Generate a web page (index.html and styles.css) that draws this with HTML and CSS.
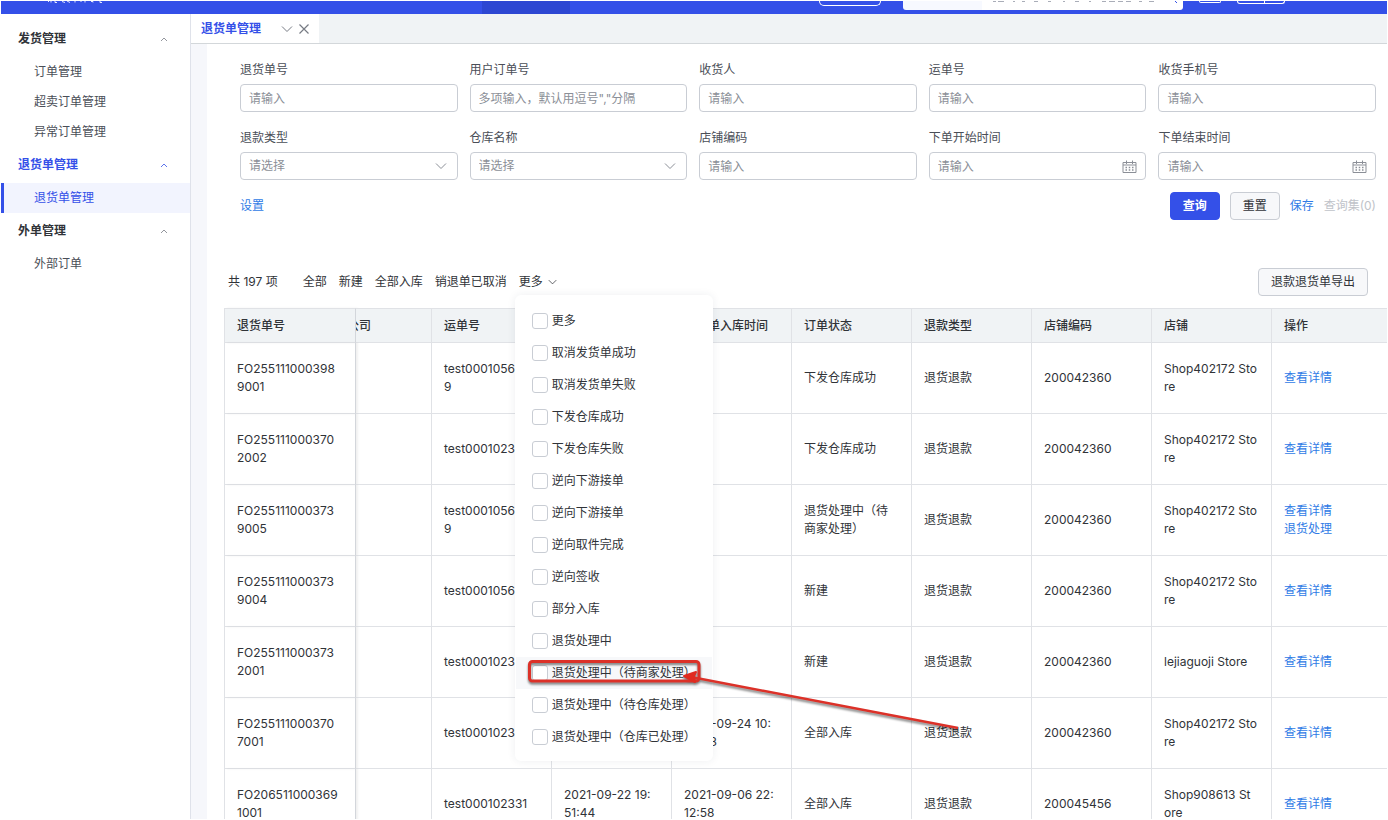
FILE: index.html
```html
<!DOCTYPE html>
<html lang="zh-CN">
<head>
<meta charset="utf-8">
<title>退货单管理</title>
<link rel="stylesheet" href="styles.css">
</head>
<body>
<svg class="symbols" aria-hidden="true">
  <symbol id="chev-down" viewBox="0 0 12 8"><path d="M1 1.5 6 6.5 11 1.5" fill="none" stroke="currentColor"/></symbol>
  <symbol id="chev-up" viewBox="0 0 8 5"><path d="M1 4 4 1 7 4" fill="none" stroke="currentColor" stroke-width=".8"/></symbol>
  <symbol id="calendar" viewBox="0 0 15 13"><path d="M1 2.5h13v10H1zM1 5h13M4.500.5V4M10.500.5V4" fill="none" stroke="currentColor"/><path d="M3.500 7.500h1.500M6.750 7.500h1.500M10 7.500h1.500M3.500 10h1.500M6.750 10h1.500M10 10h1.500" stroke="currentColor" stroke-width="1.500"/></symbol>
</svg>
<header class="topbar">
  <svg class="brand" width="60" height="4" viewBox="0 0 60 4" aria-hidden="true"><path d="M2 .5h1M5 0v1.500M9 0v1.500h2M16 .5l3 1M21 0l3 1.500M29 0v1.500M35 0v1M39 0v1.500M45 .5h2v1M54 0v1.500h2" fill="none" stroke="#dfe4ff"/></svg>
  <span class="topbar-tab"></span>
  <div class="topbar-tools">
    <span class="pill"></span>
    <span class="search"><svg width="280" height="3" viewBox="0 0 280 3" aria-hidden="true"><path d="M90 .5h3m2 0h6m9 0h2m7 0h3m9 0h4m10 0h3m12 0h2m10 0h4m10 0h2m11 0h4m3 0h6m3 0h5m3 0h5m8 0h3m7 0h5" stroke="#a9adb8"/><path d="M272 0l2 2" stroke="#3450e8"/></svg></span>
    <span class="chip"></span>
    <span class="split"></span>
  </div>
</header>
<div class="shell">
  <nav class="sidebar">
    <h2 class="group">发货管理<svg class="up"><use href="#chev-up"/></svg></h2>
    <a class="item" href="#">订单管理</a>
    <a class="item" href="#">超卖订单管理</a>
    <a class="item" href="#">异常订单管理</a>
    <h2 class="group current">退货单管理<svg class="up"><use href="#chev-up"/></svg></h2>
    <a class="item active" href="#">退货单管理</a>
    <h2 class="group">外单管理<svg class="up"><use href="#chev-up"/></svg></h2>
    <a class="item" href="#">外部订单</a>
  </nav>
  <main class="main">
    <div class="tabs">
      <div class="tab">
        <span>退货单管理</span>
        <button class="icon-btn" aria-label="展开"><svg class="down"><use href="#chev-down"/></svg></button>
        <button class="icon-btn" aria-label="关闭"><svg class="close" viewBox="0 0 10 10"><path d="M.5.5l9 9M9.500.5l-9 9" fill="none" stroke="currentColor" stroke-width="1.200"/></svg></button>
      </div>
    </div>
    <section class="panel">
      <form class="filters">
        <div class="field"><label for="f1">退货单号</label><div class="control"><input id="f1" type="text" placeholder="请输入"></div></div>
        <div class="field"><label for="f2">用户订单号</label><div class="control"><input id="f2" type="text" placeholder='多项输入，默认用逗号","分隔'></div></div>
        <div class="field"><label for="f3">收货人</label><div class="control"><input id="f3" type="text" placeholder="请输入"></div></div>
        <div class="field"><label for="f4">运单号</label><div class="control"><input id="f4" type="text" placeholder="请输入"></div></div>
        <div class="field"><label for="f5">收货手机号</label><div class="control"><input id="f5" type="text" placeholder="请输入"></div></div>
        <div class="field"><label for="f6">退款类型</label><div class="control"><select id="f6"><option>请选择</option></select><svg class="down"><use href="#chev-down"/></svg></div></div>
        <div class="field"><label for="f7">仓库名称</label><div class="control"><select id="f7"><option>请选择</option></select><svg class="down"><use href="#chev-down"/></svg></div></div>
        <div class="field"><label for="f8">店铺编码</label><div class="control"><input id="f8" type="text" placeholder="请输入"></div></div>
        <div class="field"><label for="f9">下单开始时间</label><div class="control"><input id="f9" type="text" placeholder="请输入"><svg class="cal"><use href="#calendar"/></svg></div></div>
        <div class="field"><label for="f10">下单结束时间</label><div class="control"><input id="f10" type="text" placeholder="请输入"><svg class="cal"><use href="#calendar"/></svg></div></div>
      </form>
      <div class="actions">
        <a class="link" href="#">设置</a>
        <div class="action-group">
          <button class="btn primary">查询</button>
          <button class="btn">重置</button>
          <a class="link" href="#">保存</a>
          <span class="muted">查询集(0)</span>
        </div>
      </div>
      <div class="toolbar">
        <span class="total">共 197 项</span>
        <div class="states">
          <a href="#">全部</a>
          <a href="#">新建</a>
          <a href="#">全部入库</a>
          <a href="#">销退单已取消</a>
          <div class="more">
            <button class="more-btn">更多<svg class="small"><use href="#chev-down"/></svg></button>
            <div class="menu">
              <label><input type="checkbox">更多</label>
              <label><input type="checkbox">取消发货单成功</label>
              <label><input type="checkbox">取消发货单失败</label>
              <label><input type="checkbox">下发仓库成功</label>
              <label><input type="checkbox">下发仓库失败</label>
              <label><input type="checkbox">逆向下游接单</label>
              <label><input type="checkbox">逆向下游接单</label>
              <label><input type="checkbox">逆向取件完成</label>
              <label><input type="checkbox">逆向签收</label>
              <label><input type="checkbox">部分入库</label>
              <label><input type="checkbox">退货处理中</label>
              <label class="hover"><input type="checkbox">退货处理中（待商家处理）
                <svg class="callout" width="450" height="80" viewBox="0 0 450 80" aria-hidden="true"><rect x="13.500" y="4.500" width="169.500" height="19.500" rx="3" fill="none" stroke="#dc3128" stroke-width="3"/><path d="M170 19L442 71" stroke="#dc3128" stroke-width="2.500"/><path d="M168 19L180 15L178 19L179 25Z" fill="#e02b20" stroke="#e02b20" stroke-width="2" stroke-linejoin="round"/></svg>
              </label>
              <label><input type="checkbox">退货处理中（待仓库处理）</label>
              <label><input type="checkbox">退货处理中（仓库已处理）</label>
            </div>
          </div>
        </div>
        <button class="btn export">退款退货单导出</button>
      </div>
      <table class="grid">
        <colgroup><col class="c-id"><col class="c-co"><col class="c"><col class="c"><col class="c"><col class="c"><col class="c"><col class="c"><col class="c"><col></colgroup>
        <thead>
          <tr><th>退货单号</th><th class="under"><div>公司</div></th><th>运单号</th><th></th><th>销退单入库时间</th><th>订单状态</th><th>退款类型</th><th>店铺编码</th><th>店铺</th><th>操作</th></tr>
        </thead>
        <tbody>
          <tr><td>FO255111000398<br>9001</td><td></td><td>test000105600<br>9</td><td></td><td></td><td>下发仓库成功</td><td>退货退款</td><td>200042360</td><td>Shop402172 Sto<br>re</td><td><a class="link" href="#">查看详情</a></td></tr>
          <tr><td>FO255111000370<br>2002</td><td></td><td>test000102331</td><td></td><td></td><td>下发仓库成功</td><td>退货退款</td><td>200042360</td><td>Shop402172 Sto<br>re</td><td><a class="link" href="#">查看详情</a></td></tr>
          <tr><td>FO255111000373<br>9005</td><td></td><td>test000105600<br>9</td><td></td><td></td><td>退货处理中（待商家处理）</td><td>退货退款</td><td>200042360</td><td>Shop402172 Sto<br>re</td><td><a class="link" href="#">查看详情</a><br><a class="link" href="#">退货处理</a></td></tr>
          <tr><td>FO255111000373<br>9004</td><td></td><td>test000105600</td><td></td><td></td><td>新建</td><td>退货退款</td><td>200042360</td><td>Shop402172 Sto<br>re</td><td><a class="link" href="#">查看详情</a></td></tr>
          <tr><td>FO255111000373<br>2001</td><td></td><td>test000102331</td><td></td><td></td><td>新建</td><td>退货退款</td><td>200042360</td><td>lejiaguoji Store</td><td><a class="link" href="#">查看详情</a></td></tr>
          <tr><td>FO255111000370<br>7001</td><td></td><td>test000102331</td><td></td><td>2021-09-24 10:<br>25:38</td><td>全部入库</td><td>退货退款</td><td>200042360</td><td>Shop402172 Sto<br>re</td><td><a class="link" href="#">查看详情</a></td></tr>
          <tr><td>FO206511000369<br>1001</td><td></td><td>test000102331</td><td>2021-09-22 19:<br>51:44</td><td>2021-09-06 22:<br>12:58</td><td>全部入库</td><td>退货退款</td><td>200045456</td><td>Shop908613 St<br>ore</td><td><a class="link" href="#">查看详情</a></td></tr>
        </tbody>
      </table>
    </section>
  </main>
</div>
</body>
</html>
```
FILE: styles.css
```css
* { box-sizing: border-box; }
body {
  margin: 0;
  padding: 1px;
  height: 100vh;
  overflow: hidden;
  display: flex;
  flex-direction: column;
  background: #fff;
  color: #303338;
  font: 12px/18px Inter, "Noto Sans CJK SC", sans-serif;
}
a { color: inherit; text-decoration: none; }
button, input, select { font: inherit; color: inherit; }
button { cursor: pointer; }
.symbols { display: none; }

.topbar {
  flex: none;
  height: 13px;
  display: flex;
  align-items: flex-start;
  overflow: hidden;
  padding: 0 102px 0 45px;
  background: #3450e8;
}
.brand { display: block; }
.topbar-tab { width: 88px; height: 13px; margin-left: 376px; background: #2d47d2; }
.topbar-tools { display: flex; align-items: flex-start; gap: 16px; margin-left: auto; }
.pill { width: 62px; height: 5px; margin-right: 6px; border: 1px solid #fff; border-top: 0; border-radius: 0 0 16px 16px; }
.search { width: 280px; height: 9px; border-radius: 0 0 3px 3px; background: linear-gradient(90deg, #f7f9ff 79px, #fff 79px); }
.search svg { display: block; }
.chip { width: 22px; height: 2px; border: 1px solid #fff; border-top: 0; border-radius: 0 0 4px 4px; }
.split { width: 48px; height: 3px; border: 1px solid #fff; border-top: 0; border-radius: 0 0 4px 4px; background: linear-gradient(#fff, #fff) 26px 0 / 1px 100% no-repeat; }

.shell { flex: 1; min-height: 0; display: flex; }
.sidebar { flex: none; width: 190px; padding-top: 7px; border-right: 1px solid #dfe2ea; }
.group {
  display: flex;
  align-items: center;
  justify-content: space-between;
  height: 36px;
  margin: 0;
  padding: 0 22px 0 17px;
  font-size: 12px;
  font-weight: 700;
}
.up { width: 8px; height: 5px; color: #777b84; }
.current { color: #3450e8; }
.current .up { color: #3450e8; }
.item { display: flex; align-items: center; height: 30px; padding-left: 33px; color: #4a4e57; }
.active { padding-left: 30px; border-left: 3px solid #3450e8; background: #f2f4fe; color: #3450e8; }

.main { flex: 1; min-width: 0; display: flex; flex-direction: column; background: #f6f7fb; }
.tabs { flex: none; display: flex; height: 30px; border-bottom: 1px solid #d3d7da; background: #f0f3f5; }
.tab { display: flex; align-items: center; gap: 6px; width: 128px; padding-left: 10px; background: #fff; color: #3450e8; font-weight: 700; }
.tab span { margin-right: 14px; }
.icon-btn { display: flex; padding: 0; border: 0; background: none; color: #777b84; }
.down { width: 12px; height: 8px; color: #777b84; }
.close { width: 10px; height: 10px; }

.panel { flex: 1; min-height: 0; overflow: hidden; margin-left: 16px; padding: 17px 0 0 17px; background: #fff; }
.filters { display: grid; grid-template-columns: repeat(5, 1fr); gap: 17px 12px; padding: 0 11px 0 16px; }
.field { display: flex; flex-direction: column; gap: 5px; min-width: 0; color: #4a4e57; }
.control { position: relative; display: flex; }
.control input, .control select {
  appearance: none;
  width: 100%;
  height: 28px;
  padding: 0 8px;
  border: 1px solid #c9cdd4;
  border-radius: 4px;
  background: #fff;
  color: #8b8f97;
  outline: 0;
}
.control input::placeholder { color: #8b8f97; }
.control svg { position: absolute; top: 10px; right: 11px; pointer-events: none; color: #8b8f97; }
.control .cal { top: 8px; right: 9px; width: 15px; height: 13px; }

.actions { display: flex; align-items: center; justify-content: space-between; margin-top: 12px; padding: 0 11px 0 16px; }
.action-group { display: flex; align-items: center; gap: 10px; }
.link { color: #2f7be6; }
.muted { color: #c0c3c9; }
.btn { height: 28px; padding: 0 12px; border: 1px solid #c9cdd4; border-radius: 4px; background: #f7f8fa; }
.primary { border-color: #3450e8; background: #3450e8; color: #fff; font-weight: 700; }

.toolbar { display: flex; align-items: center; margin: 48px 0 12px; padding: 0 19px 0 4px; }
.total { margin-right: 25px; }
.states { display: flex; align-items: center; gap: 12px; }
.export { margin-left: auto; }
.more { position: relative; z-index: 2; }
.more-btn { display: flex; align-items: center; gap: 5px; padding: 0; border: 0; background: none; }
.small { width: 9px; height: 6px; }
.menu {
  position: absolute;
  top: 22px;
  left: -4px;
  width: 198px;
  padding: 10px 1px 8px;
  border-radius: 6px;
  background: #fff;
  box-shadow: 0 0 8px rgba(40, 50, 80, .08);
}
.menu label { position: relative; display: flex; align-items: center; gap: 4px; height: 32px; padding-left: 16px; white-space: nowrap; }
.menu input { appearance: none; flex: none; width: 16px; height: 16px; margin: 0; border: 1px solid #c9cdd4; border-radius: 3px; background: #fff; }
.menu .hover { background: #f7f8fa; }
.callout { position: absolute; top: 0; left: 0; overflow: visible; pointer-events: none; filter: drop-shadow(0 2px 1px rgba(0, 0, 0, .5)); }

.grid { width: 100%; table-layout: fixed; border-collapse: separate; border-spacing: 0; border-left: 1px solid #e0e2e6; }
.c-id { width: 131px; }
.c-co { width: 76px; }
.c { width: 120px; }
.grid th, .grid td { padding: 0 12px; border-right: 1px solid #e0e2e6; border-bottom: 1px solid #e0e2e6; text-align: left; }
.grid th { height: 35px; border-top: 1px solid #e0e2e6; background: #f0f3f5; font-weight: 500; white-space: nowrap; }
.grid td { height: 71px; }
.grid th:last-child, .grid td:last-child { border-right: 0; }
.grid th:first-child, .grid td:first-child { border-right-color: #d3d6db; box-shadow: 2px 0 2px rgba(0, 0, 0, .06); }
.grid th.under { padding: 0; }
.under div { display: flex; justify-content: flex-end; width: 15px; overflow: hidden; }
```
